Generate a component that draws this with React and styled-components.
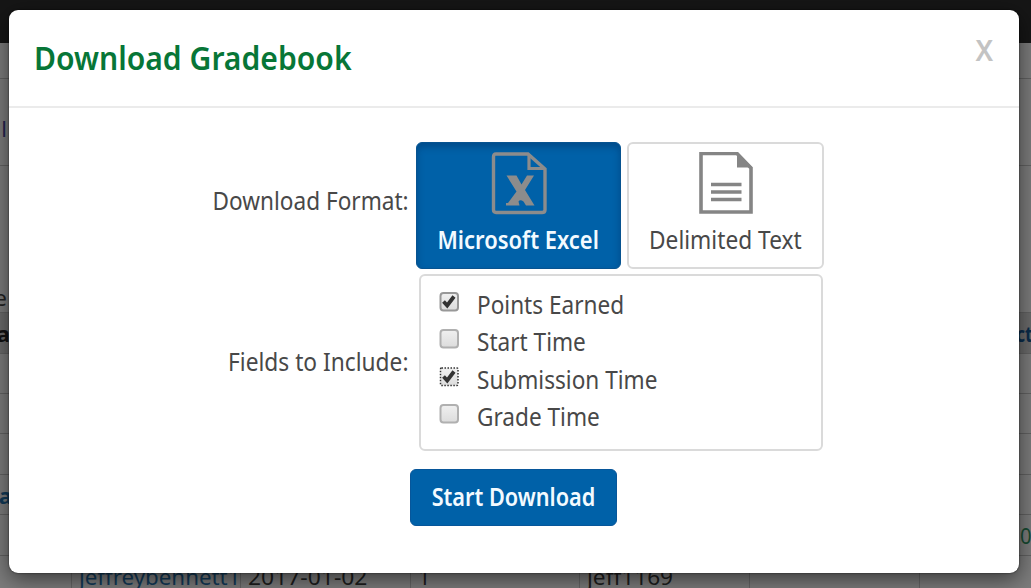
import React from "react";
import styled, { createGlobalStyle, css } from "styled-components";

const Global = createGlobalStyle`
  * { box-sizing: border-box; }
  html, body, #root { height: 100%; }
  body {
    margin: 0;
    overflow: hidden;
    background: #000;
    color: #484848;
    font: 24.5px/30px "Noto Sans", "Open Sans", sans-serif;
  }
`;

/* Horizontally condensed run of text. */
const Narrow = styled.span`
  display: inline-block;
  white-space: nowrap;
  transform: scaleX(${(p) => p.$x || 0.922});
  transform-origin: ${(p) => p.$from || "left"} center;
`;

const Screen = styled.div`
  position: relative;
  width: 1031px;
  height: 588px;
  overflow: hidden;
`;

const Page = styled.div`
  display: flex;
  flex-direction: column;
  height: 100%;
  background: #7c7c7c;
`;

const NavBar = styled.div`
  flex: none;
  height: 43px;
  background: #161616;
`;

const Row = styled.div`
  flex: none;
  display: flex;
  justify-content: space-between;
  align-items: ${(p) => (p.$end ? "flex-end" : "center")};
  height: ${(p) => p.$h}px;
  padding-top: ${(p) => p.$drop || 0}px;
  background: ${(p) => (p.$head ? "#6b6b6b" : "transparent")};
  border-bottom: 1px solid #626262;
`;

const Peek = styled.span`
  width: ${(p) => p.$w || 12}px;
  display: flex;
  white-space: nowrap;
  font-size: 22px;
  justify-content: ${(p) => (p.$right ? "flex-start" : "flex-end")};
  color: ${(p) => p.$color || "#222"};
  font-weight: ${(p) => (p.$bold ? 700 : 400)};
`;

const DataRow = styled.div`
  flex: 1;
  display: grid;
  grid-template-columns: 72px 169px 170px 169px 170px 170px 1fr;
`;

const Cell = styled.div`
  border-right: 1px solid #666;
  padding: 6px 0 0 7px;
  font-size: 22px;
  line-height: 28px;
  color: ${(p) => (p.$link ? "#123a58" : "#1e1e1e")};
  white-space: nowrap;
`;

const Layer = styled.div`
  position: absolute;
  inset: 0;
  padding: 10px 12px 15px 9px;
`;

const Dialog = styled.section`
  height: 563px;
  background: #fff;
  border-radius: 9px;
  box-shadow: 0 6px 22px rgba(0, 0, 0, 0.55), 0 0 2px rgba(0, 0, 0, 0.7);
`;

const Header = styled.header`
  display: flex;
  justify-content: space-between;
  height: 98px;
  padding: 30px 26px 0 25px;
  border-bottom: 2px solid #ebebeb;
`;

const Title = styled.h1`
  margin: 0;
  font-size: 33px;
  line-height: 36px;
  font-weight: 600;
  color: #077637;
`;

const Close = styled.button`
  border: 0;
  padding: 0;
  height: 20px;
  background: none;
  color: #c3c3c3;
  font: 600 28.5px/20px "Noto Sans", sans-serif;
`;

const Body = styled.form`
  display: flex;
  flex-direction: column;
  padding-top: 34px;
`;

const Field = styled.div`
  display: grid;
  grid-template-columns: 400px 1fr;
  height: ${(p) => p.$h}px;
  margin-bottom: 6px;
`;

const FieldLabel = styled.span`
  text-align: right;
  padding-top: ${(p) => p.$top}px;
`;

const Choices = styled.div`
  display: flex;
  gap: 6px;
  padding-left: 7px;
`;

const Choice = styled.button`
  display: flex;
  flex-direction: column;
  align-items: center;
  height: 127px;
  padding: 9px 0 0;
  border-radius: 6px;
  font: inherit;
  ${(p) =>
    p.$active
      ? css`
          width: 205px;
          color: #f3faff;
          font-weight: 600;
          background: #0061a8;
          border: 1px solid #075390;
          box-shadow: inset 0 4px 7px rgba(0, 35, 80, 0.35);
        `
      : css`
          width: 197px;
          color: #484848;
          background: #fff;
          border: 2px solid #dadada;
          padding-top: 8px;
        `}
  svg { display: block; flex: none; margin-bottom: 9px; }
`;

const Options = styled.div`
  width: 404px;
  margin: -1px 0 0 10px;
  height: 177px;
  border: 2px solid #dadada;
  border-radius: 6px;
  padding: 9px 0 0 18px;
`;

const Option = styled.label`
  display: flex;
  height: 37.4px;
  gap: 18px;
  padding-top: 5px;
  svg { flex: none; margin-top: 2px; }
`;

const Submit = styled.button`
  width: 207px;
  height: 57px;
  margin: 11px 0 0 401px;
  border: 1px solid #07569a;
  border-radius: 6px;
  background: #0061a8;
  color: #f3faff;
  font: 600 24.5px/30px "Noto Sans", sans-serif;
  padding: 0 0 1px;
`;

const ExcelIcon = () => (
  <svg width="56" height="64" viewBox="0 0 56 64" fill="none" stroke="#8c8c8c">
    <path d="M5 2H37L54 17V58Q54 60.5 51 60.5H5Q2.5 60.5 2.5 58V5Q2.5 2 5 2Z" strokeWidth="3.4" />
    <path d="M38 3V16.5H53" strokeWidth="3.2" />
    <path
      fill="#8c8c8c"
      stroke="none"
      d="M15.5 23.5H25.5L30.5 32.5L36 23.5H43L34 38L43.5 53.5H35L32.5 49.5Q29 47 27.5 49.5L28.5 53.5H15V51H17L25.5 39.5Z"
    />
  </svg>
);

const TextIcon = () => (
  <svg width="56" height="64" viewBox="0 0 56 64" fill="none" stroke="#858585">
    <path d="M3 1.5H39L53 16V60H3Z" strokeWidth="3.6" />
    <path d="M39 0L54.5 15.5H39Z" fill="#858585" stroke="none" />
    <path d="M13 32.5H43.5M13 40H43.5M13 47.5H43.5" strokeWidth="3.6" />
  </svg>
);

const Box = ({ checked, focus }) => (
  <svg width="20" height="20" viewBox="0 0 20 20" fill="none">
    <defs>
      <linearGradient id="face" x1="0" y1="0" x2="0" y2="1">
        <stop offset="0" stopColor="#f0f0f0" />
        <stop offset="1" stopColor="#dcdcdc" />
      </linearGradient>
    </defs>
    <rect
      x="1.5" y="1" width="17.5" height="17.5"
      rx={focus ? 1 : 3}
      fill="url(#face)"
      stroke={focus ? "#333" : checked ? "#989898" : "#b0b0b0"}
      strokeWidth={focus ? 1.5 : 2}
      strokeDasharray={focus ? "1.5 1.5" : undefined}
    />
    {checked && <path d="M4.5 9.5L8.2 13.5L15 4.5" stroke="#333" strokeWidth="3.8" />}
  </svg>
);

const options = [
  { name: "Points Earned", checked: true },
  { name: "Start Time" },
  { name: "Submission Time", checked: true, focus: true },
  { name: "Grade Time" },
];

export default function App() {
  return (
    <Screen>
      <Global />
      <Page>
        <NavBar />
        <Row $h={36} />
        <Row $h={87} $drop={12}><Peek $w={7} $color="#252550">l</Peek></Row>
        <Row $h={147} $end><Peek $w={7}>e</Peek></Row>
        <Row $h={41} $head>
          <Peek $bold $w={10} $color="#111">a</Peek>
          <Peek $bold $right $w={15} $color="#0b2d4c"><Narrow $x={0.8}>ct</Narrow></Peek>
        </Row>
        <Row $h={40} />
        <Row $h={40} />
        <Row $h={41} />
        <Row $h={40}><Peek $bold $color="#123a58">na</Peek></Row>
        <Row $h={41}><span /><Peek $right $w={11} $color="#174b32"><Narrow>0</Narrow></Peek></Row>
        <DataRow>
          <Cell />
          <Cell $link><Narrow $x={1.015}>jeffreybennett1</Narrow></Cell>
          <Cell><Narrow $x={1.04}>2017-01-02</Narrow></Cell>
          <Cell><Narrow $x={1}>1</Narrow></Cell>
          <Cell><Narrow $x={1.03}>jeff1169</Narrow></Cell>
          <Cell />
        </DataRow>
      </Page>
      <Layer>
        <Dialog>
          <Header>
            <Title><Narrow $x={0.912}>Download Gradebook</Narrow></Title>
            <Close><Narrow $x={0.97} $from="right">X</Narrow></Close>
          </Header>
          <Body>
            <Field $h={127}>
              <FieldLabel $top={44}><Narrow $from="right">Download Format:</Narrow></FieldLabel>
              <Choices>
                <Choice type="button" $active>
                  <ExcelIcon />
                  <Narrow $x={0.895} $from="center">Microsoft Excel</Narrow>
                </Choice>
                <Choice type="button">
                  <TextIcon />
                  <Narrow $x={0.927} $from="center">Delimited Text</Narrow>
                </Choice>
              </Choices>
            </Field>
            <Field $h={177}>
              <FieldLabel $top={72}><Narrow $x={0.928} $from="right">Fields to Include:</Narrow></FieldLabel>
              <Options>
                {options.map((o) => (
                  <Option key={o.name}>
                    <Box checked={o.checked} focus={o.focus} />
                    <Narrow>{o.name}</Narrow>
                  </Option>
                ))}
              </Options>
            </Field>
            <Submit type="button"><Narrow $x={0.885} $from="center">Start Download</Narrow></Submit>
          </Body>
        </Dialog>
      </Layer>
    </Screen>
  );
}
